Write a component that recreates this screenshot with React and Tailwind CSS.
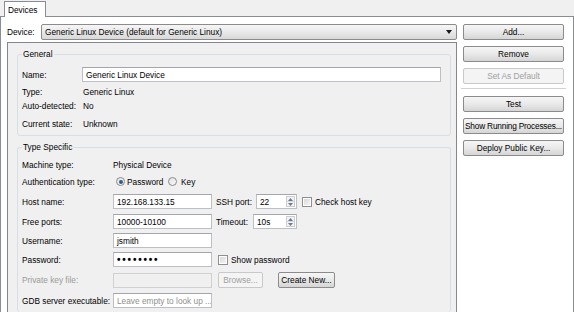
import React from "react";

function Btn({ children, disabled, className = "" }) {
  return (
    <div
      className={`flex h-[16px] items-center justify-center rounded-[2px] border ${
        disabled
          ? "border-[#c9c9c9] bg-[#f4f4f4] text-[#a0a0a0]"
          : "border-[#8b8b8b] bg-linear-to-b from-[#f6f6f6] via-[#e9e9e9] to-[#d5d5d5] text-black"
      } ${className}`}
    >
      {children}
    </div>
  );
}

function Field({ w, value, placeholder, disabled, className = "" }) {
  return (
    <div
      className={`flex h-[15px] items-center overflow-hidden border pl-[3px] ${
        disabled ? "border-[#d0d0d0] bg-[#f0f0f0]" : "border-[#bcbfc4] border-t-[#a3a6ab] bg-white"
      } ${w} ${className}`}
    >
      {value ? value : <span className="text-[#8f8f8f]">{placeholder}</span>}
    </div>
  );
}

function Spin({ value, w }) {
  return (
    <div className={`flex h-[15px] border border-[#bcbfc4] border-t-[#a3a6ab] bg-white ${w}`}>
      <div className="flex flex-1 items-center pl-[3px]">{value}</div>
      <div className="my-[1px] mr-[1px] flex w-[9px] flex-col border border-[#cdcdcd] bg-[#f3f3f3]">
        <div className="flex flex-1 items-center justify-center border-b border-[#d8d8d8]">
          <svg width="5" height="3" viewBox="0 0 5 3">
            <path d="M0 3 L2.5 0 L5 3 Z" fill="#6b7b96" />
          </svg>
        </div>
        <div className="flex flex-1 items-center justify-center">
          <svg width="5" height="3" viewBox="0 0 5 3">
            <path d="M0 0 L2.5 3 L5 0 Z" fill="#6b7b96" />
          </svg>
        </div>
      </div>
    </div>
  );
}

function Check({ className = "" }) {
  return (
    <div className={`flex h-[10px] w-[10px] items-center justify-center border border-[#8f8f8f] bg-white ${className}`}>
      <div className="h-[6px] w-[6px] bg-linear-to-br from-[#d9d9d9] to-[#f4f4f4]" />
    </div>
  );
}

function Radio({ on, className = "" }) {
  return (
    <div
      className={`flex h-[9px] w-[9px] items-center justify-center rounded-full border border-[#8a8a8a] bg-linear-to-br from-[#e2e2e2] to-[#fafafa] ${className}`}
    >
      {on && <div className="h-[4px] w-[4px] rounded-full bg-[#2f5a8c]" />}
    </div>
  );
}

function Group({ title, className = "", children }) {
  return (
    <div className={`relative rounded-[3px] border border-[#d5dfe5] ${className}`}>
      <span className="absolute left-[4px] top-[-6px] bg-[#f0f0f0] px-[1px] leading-[10px]">{title}</span>
      {children}
    </div>
  );
}

export default function App() {
  return (
    <div className="flex h-[312px] w-[574px] flex-col overflow-hidden whitespace-nowrap bg-[#f0f0f0] font-['Liberation_Sans',Arial,sans-serif] text-[8.3px] leading-[10px] text-black">
      {/* tab bar */}
      <div className="flex h-[16px] items-end pl-[4px]">
        <div className="relative z-10 -mb-px flex h-[16px] w-[42px] items-center border border-b-0 border-[#898c95] bg-white pl-[3px]">
          Devices
        </div>
      </div>

      {/* tab pane */}
      <div className="flex flex-1 gap-[6px] border border-b-0 border-[#898c95] bg-white pl-[6px] pt-[7px]">
        <div className="flex w-[450px] flex-col">
          <div className="flex h-[16px] items-center">
            <span className="w-[34px]">Device:</span>
            <div className="flex h-[16px] flex-1 items-center rounded-[2px] border border-[#8b8b8b] bg-linear-to-b from-[#f6f6f6] via-[#e9e9e9] to-[#d8d8d8] pl-[3px] pr-[4px]">
              <span className="flex-1">Generic Linux Device (default for Generic Linux)</span>
              <svg width="6" height="4" viewBox="0 0 6 4">
                <path d="M0 0 L6 0 L3 4 Z" fill="#1a1a1a" />
              </svg>
            </div>
          </div>

          {/* scroll area */}
          <div className="mt-[2px] flex flex-1 flex-col border border-b-0 border-[#828790] bg-[#f0f0f0] pl-[9px] pt-[11px]">
            <Group title="General" className="w-[434px] pb-[4px] pl-[4px] pt-[12px]">
              <div className="flex h-[15px] items-center">
                <span className="w-[60px]">Name:</span>
                <Field w="w-[359px]" value="Generic Linux Device" />
              </div>
              <div className="mt-[3px] flex h-[14px] items-center">
                <span className="w-[60px]">Type:</span>
                <span className="pl-[1px]">Generic Linux</span>
              </div>
              <div className="flex h-[14px] items-center">
                <span className="w-[60px]">Auto-detected:</span>
                <span className="pl-[1px]">No</span>
              </div>
              <div className="mt-[4px] flex h-[14px] items-center">
                <span className="w-[60px]">Current state:</span>
                <span className="pl-[1px]">Unknown</span>
              </div>
            </Group>

            <Group title="Type Specific" className="mt-[11px] w-[434px] flex-1 border-b-0 pl-[4px] pt-[10px]">
              <div className="flex h-[14px] items-center">
                <span className="w-[91px]">Machine type:</span>
                <span>Physical Device</span>
              </div>
              <div className="mt-[2px] flex h-[15px] items-center">
                <span className="w-[91px]">Authentication type:</span>
                <Radio on className="ml-[3px]" />
                <span className="ml-[2px] w-[41px]">Password</span>
                <Radio />
                <span className="ml-[4px]">Key</span>
              </div>
              <div className="mt-[5px] flex h-[15px] items-center">
                <span className="w-[91px]">Host name:</span>
                <Field w="w-[99px]" value="192.168.133.15" />
                <span className="ml-[4px] w-[40px]">SSH port:</span>
                <Spin w="w-[41px]" value="22" />
                <Check className="ml-[5px]" />
                <span className="ml-[3px]">Check host key</span>
              </div>
              <div className="mt-[5px] flex h-[15px] items-center">
                <span className="w-[91px]">Free ports:</span>
                <Field w="w-[99px]" value="10000-10100" />
                <span className="ml-[4px] w-[37px]">Timeout:</span>
                <Spin w="w-[44px]" value="10s" />
              </div>
              <div className="mt-[4px] flex h-[15px] items-center">
                <span className="w-[91px]">Username:</span>
                <Field w="w-[99px]" value="jsmith" />
              </div>
              <div className="mt-[4px] flex h-[15px] items-center">
                <span className="w-[91px]">Password:</span>
                <Field
                  w="w-[99px]"
                  value={<span className="text-[10px] font-bold tracking-[1.8px]">••••••••</span>}
                />
                <Check className="ml-[6px]" />
                <span className="ml-[3px]">Show password</span>
              </div>
              <div className="mt-[5px] flex h-[16px] items-center">
                <span className="w-[91px] text-[#9a9a9a]">Private key file:</span>
                <Field w="w-[99px]" disabled />
                <Btn disabled className="ml-[6px] w-[45px]">Browse...</Btn>
                <Btn className="ml-[15px] w-[57px]">Create New...</Btn>
              </div>
              <div className="mt-[5px] flex h-[15px] items-center">
                <span className="w-[91px]">GDB server executable:</span>
                <Field w="w-[99px]" placeholder="Leave empty to look up ..." />
              </div>
            </Group>
          </div>
        </div>

        {/* buttons */}
        <div className="flex w-[101px] flex-col">
          <Btn>Add...</Btn>
          <Btn className="mt-[6px]">Remove</Btn>
          <Btn disabled className="mt-[6px]">Set As Default</Btn>
          <div className="-mx-[2px] mt-[4px] h-[2px] border-t border-[#d2d2d2] bg-white" />
          <Btn className="mt-[6px]">Test</Btn>
          <Btn className="mt-[6px] tracking-[-0.2px]">Show Running Processes...</Btn>
          <Btn className="mt-[6px]">Deploy Public Key...</Btn>
        </div>
      </div>
    </div>
  );
}
